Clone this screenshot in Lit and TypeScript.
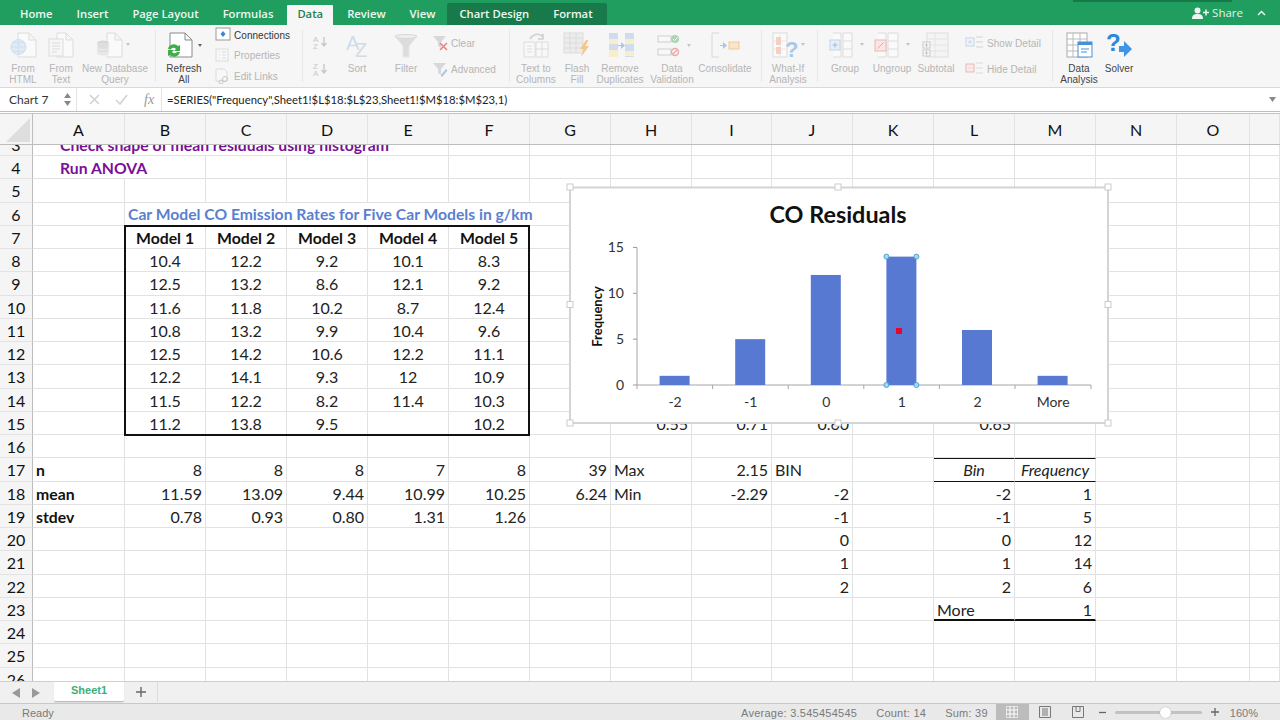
import { LitElement, html, css, svg } from "lit";
import { customElement } from "lit/decorators.js";

const F = "#dcdcdc";
const page = (x = 8, y = 2, w = 19, h = 24) => svg`<path d="M${x} ${y}h${w - 7}l7 7v${h - 7}h-${w}z M${x + w - 7} ${y}v7h7" fill="#fafafa" stroke="${F}"/>`;
const caret = (x: number, y: number, c = "#c4c4c4") => svg`<path d="M${x} ${y}h4l-2 3z" fill="${c}"/>`;

const icons: Record<string, any> = {
  html: svg`${page(13, 1, 18, 24)}<circle cx="13.500" cy="15" r="7.500" fill="#dfeaf5" stroke="#cfdfee"/><path d="M6 15h15M13.500 7.500v15M8 10.500h11M8 19.500h11" stroke="#cfdfee" fill="none"/>`,
  text: svg`${page(14, 1, 16, 24)}<rect x="6" y="7" width="14" height="17" fill="#f6f6f6" stroke="${F}"/><path d="M9 11h8M9 14h8M9 17h8M9 20h5" stroke="${F}"/>`,
  query: svg`${page(10, 1, 15, 24)}<ellipse cx="6" cy="11" rx="6" ry="2.500" fill="#d8d8d8"/><path d="M0 11v10c0 3 12 3 12 0v-10" fill="#dedede" stroke="#f2f2f2"/><path d="M0 15.500c0 3 12 3 12 0M0 19c0 3 12 3 12 0" stroke="#f2f2f2" fill="none"/>${caret(29, 11)}`,
  refresh: svg`<path d="M4 1h15l7 7v17h-22z M19 1v7h7" fill="#fff" stroke="#8a8a8a"/><path d="M2 17a6 6 0 0 1 10-3l2-1v6h-6l2-2a3.500 3.500 0 0 0-5 0z" fill="#3fae49"/><path d="M14 20a6 6 0 0 1-10 3l-2 1v-6h6l-2 2a3.500 3.500 0 0 0 5 0z" fill="#3fae49"/>${caret(32, 12, "#666")}`,
  arrows: svg`<text x="9" y="8" class="az">A</text><text x="9" y="15" class="az">Z</text><path d="M20 3v9M17.500 9l2.500 3 2.500-3" stroke="#c8c8c8" fill="none" stroke-width="1.400"/>`,
  arrows2: svg`<text x="9" y="8" class="az">Z</text><text x="9" y="15" class="az">A</text><path d="M20 3v9M17.500 9l2.500 3 2.500-3" stroke="#c8c8c8" fill="none" stroke-width="1.400"/>`,
  sort: svg`<text x="7" y="18" class="azl" fill="#cfdcee">A</text><text x="16" y="25" class="azl" fill="#d6dbe2">Z</text>`,
  filter: svg`<path d="M7 4h22l-8 10v11h-6v-11z" fill="#dcdcdc" stroke="#e6e6e6"/><ellipse cx="18" cy="4.500" rx="11" ry="2" fill="#efefef" stroke="#d8d8d8"/>`,
  ttc: svg`<path d="M6 10h11v15h-11zM18 10h12v15h-12zM24 10v15M18 17h12M9 14h5M9 17h5M9 20h5" stroke="${F}" fill="#f8f8f8"/><path d="M12 7c3-5 8-6 12-3l1-2v5h-5" stroke="#d0d0d0" fill="none" stroke-width="1.500"/>`,
  flash: svg`<rect x="5" y="1" width="19" height="20" fill="#ececec" stroke="${F}"/><path d="M11 1v20M17 1v20M5 6h19M5 11h19M5 16h19" stroke="#dcdcdc"/><path d="M27 8l-6 9h3.500l-2.500 8 8-11h-3.500l3-6z" fill="#f4c68c"/>`,
  remove: svg`<rect x="7" y="1" width="9" height="24" fill="#f7eecb"/><rect x="7" y="1" width="9" height="6" fill="#d2dcef"/><rect x="7" y="12" width="9" height="6" fill="#d2dcef"/><rect x="23" y="1" width="9" height="24" fill="#d2dcef"/><rect x="23" y="7" width="9" height="5" fill="#f7eecb"/><rect x="23" y="19" width="9" height="5" fill="#f7eecb"/><path d="M16 13h3v-3l4 3.500-4 3.500v-3h-3z" fill="#a9c7e8"/>`,
  valid: svg`<rect x="4" y="4" width="13" height="6" fill="#f8f8f8" stroke="#cfcfcf"/><rect x="4" y="17" width="13" height="6" fill="#f8f8f8" stroke="#cfcfcf"/><circle cx="21" cy="7" r="4" fill="#a9d8b0"/><path d="M19 7l1.500 1.500 3-3" stroke="#fff" fill="none"/><circle cx="21" cy="20" r="3.500" fill="#f5f5f5" stroke="#eaa8a8" stroke-width="1.400"/><path d="M18.700 22.300l4.600-4.600" stroke="#eaa8a8" stroke-width="1.300"/>${caret(33, 12)}`,
  consol: svg`<path d="M12 1h-7v24h7" fill="none" stroke="#d8d8d8"/><path d="M13 13h3v-3l4 3.500-4 3.500v-3h-3z" fill="#a9c7e8"/><rect x="22" y="10" width="10" height="7" fill="#f8e6cc" stroke="#eec997"/>`,
  whatif: svg`<rect x="3" y="1" width="14" height="24" fill="#fafafa" stroke="${F}"/><path d="M3 9h14M3 17h14M10 1v24" stroke="#e8e8e8"/><rect x="6" y="5" width="5" height="8" fill="#f5d0c2"/><rect x="6" y="15" width="5" height="7" fill="#f5d0c2"/><text x="15" y="25" class="q" fill="#a9c7e8">?</text>${caret(31, 11)}`,
  group: svg`<path d="M6 1h8v24h-8M16 1h9v24h-9zM16 9h9M16 17h9" stroke="${F}" fill="#fafafa"/><rect x="3" y="8" width="10" height="10" fill="#e6eef8" stroke="#c3d6ea"/><path d="M5.500 13h5M8 10.500v5" stroke="#a3bcd6"/>${caret(33, 11)}`,
  ungroup: svg`<path d="M4 1h8v24h-8M14 1h10v24h-10zM14 9h10M14 17h10" stroke="${F}" fill="#fafafa"/><rect x="1" y="8" width="11" height="11" fill="#fbe6e6" stroke="#eab6b6"/><path d="M3.500 16.500l6-6" stroke="#e5a5a5"/>${caret(32, 11)}`,
  subtotal: svg`<rect x="9" y="1" width="21" height="24" fill="#f4f4f4" stroke="#dedede"/><path d="M17 1v24M9 7h21M9 13h21M9 19h21" stroke="#e4e4e4"/><rect x="5" y="10" width="7" height="6" fill="#fafafa" stroke="#cacaca"/><rect x="5" y="18" width="7" height="6" fill="#fafafa" stroke="#cacaca"/><path d="M6.500 13h4M8.500 11v4M6.500 21h4M8.500 19v4" stroke="#c4c4c4"/>`,
  analysis: svg`<rect x="6" y="1" width="20" height="24" fill="#fff" stroke="#aaa"/><path d="M6 7h20M6 13h20M6 19h20M12 1v24M19 1v24" stroke="#bbb"/><rect x="17" y="10" width="14" height="15" fill="#fff" stroke="#4a8fd6"/><rect x="17" y="10" width="14" height="3" fill="#4a8fd6"/><path d="M20 17h8M20 20h6" stroke="#4a8fd6"/>`,
  solver: svg`<text x="5" y="19" class="q2" fill="#2f86de">?</text><path d="M18 14h5v-5l8 8-8 8v-5h-5z" fill="#3e94e6"/>`,
};

const small: Record<string, any> = {
  conn: svg`<rect x="1" y="1" width="14" height="12" fill="#fff" stroke="#999"/><path d="M8 4l2.500 3-2.500 3-2.500-3z" fill="#3b86d6"/>`,
  props: svg`<rect x="1" y="1" width="12" height="12" fill="#f8f8f8" stroke="${F}"/><path d="M4 4h1M7 4h4M4 7h1M7 7h4M4 10h1M7 10h4" stroke="#cfdfee"/>`,
  links: svg`<path d="M1 1h8l3 3v9h-11z" fill="#f8f8f8" stroke="${F}"/><circle cx="10" cy="11" r="2.500" fill="none" stroke="#c8c8c8"/><circle cx="6" cy="14" r="2" fill="none" stroke="#c8c8c8"/>`,
  clear: svg`<path d="M1 1h13l-5 6v6l-3-2v-4z" fill="#d8d8d8"/><path d="M8 8l7 7M15 8l-7 7" stroke="#e58a8a" stroke-width="1.700"/>`,
  adv: svg`<path d="M1 2h13l-5 6v6l-3-2v-4z" fill="#d8d8d8"/><path d="M9 14l5-6 1.500 1.500-5 6h-1.500z" fill="#a9c7e8"/>`,
  show: svg`<rect x="1" y="3" width="8" height="8" fill="#eef4fa" stroke="#c3d6ea"/><path d="M3 7h4M5 5v4M11 2h7M11 7h7M11 12h7" stroke="#d4d4d4"/>`,
  hide: svg`<rect x="1" y="3" width="8" height="8" fill="#fbeaea" stroke="#eab6b6"/><path d="M3 7h4M11 2h7M11 7h7M11 12h7" stroke="#dcdcdc"/>`,
};

type Rib =
  | { k: "gap"; w: number }
  | { k: "sep"; w: number }
  | { k: "big"; w: number; i: string; t: string[]; on?: boolean }
  | { k: "stack"; w: number; pad: number; iw: number; rows: [string, string, boolean?][]; three?: boolean }
  | { k: "pair"; w: number };

const ribbon: Rib[] = [
  { k: "gap", w: 4 },
  { k: "big", w: 38, i: "html", t: ["From", "HTML"] },
  { k: "big", w: 38, i: "text", t: ["From", "Text"] },
  { k: "big", w: 70, i: "query", t: ["New Database", "Query"] },
  { k: "sep", w: 10 },
  { k: "big", w: 48, i: "refresh", t: ["Refresh", "All"], on: true },
  { k: "stack", w: 92, pad: 7, iw: 16, three: true, rows: [["conn", "Connections", true], ["props", "Properties"], ["links", "Edit Links"]] },
  { k: "sep", w: 4 },
  { k: "pair", w: 36 },
  { k: "big", w: 34, i: "sort", t: ["Sort"] },
  { k: "gap", w: 10 },
  { k: "big", w: 44, i: "filter", t: ["Filter"] },
  { k: "stack", w: 77, pad: 4, iw: 16, rows: [["clear", "Clear"], ["adv", "Advanced"]] },
  { k: "sep", w: 8 },
  { k: "big", w: 46, i: "ttc", t: ["Text to", "Columns"] },
  { k: "big", w: 36, i: "flash", t: ["Flash", "Fill"] },
  { k: "big", w: 50, i: "remove", t: ["Remove", "Duplicates"] },
  { k: "big", w: 54, i: "valid", t: ["Data", "Validation"] },
  { k: "big", w: 52, i: "consol", t: ["Consolidate"] },
  { k: "sep", w: 20 },
  { k: "big", w: 34, i: "whatif", t: ["What-If", "Analysis"] },
  { k: "sep", w: 24 },
  { k: "big", w: 32, i: "group", t: ["Group"] },
  { k: "gap", w: 10 },
  { k: "big", w: 42, i: "ungroup", t: ["Ungroup"] },
  { k: "big", w: 46, i: "subtotal", t: ["Subtotal"] },
  { k: "stack", w: 86, pad: 6, iw: 19, rows: [["show", "Show Detail"], ["hide", "Hide Detail"]] },
  { k: "sep", w: 14 },
  { k: "big", w: 40, i: "analysis", t: ["Data", "Analysis"], on: true },
  { k: "big", w: 40, i: "solver", t: ["Solver"], on: true },
];

const COLS = ["A", "B", "C", "D", "E", "F", "G", "H", "I", "J", "K", "L", "M", "N", "O"];

type Cell = { t?: string; a?: string; span?: number; cls?: string };
const cells = new Map<string, Cell>();
const put = (r: number, c: number, t: string, a = "r", cls = "", span = 1) => cells.set(r + "," + c, { t, a, cls, span });

put(3, 1, "Check shape of mean residuals using histogram", "l", "purple", 5);
put(4, 1, "Run ANOVA", "l", "purple", 2);
put(6, 2, "Car Model CO Emission Rates for Five Car Models in g/km", "l", "title", 6);
["Model 1", "Model 2", "Model 3", "Model 4", "Model 5"].forEach((t, i) => put(7, 2 + i, t, "c", "bold"));
[
  ["10.4", "12.2", "9.2", "10.1", "8.3"],
  ["12.5", "13.2", "8.6", "12.1", "9.2"],
  ["11.6", "11.8", "10.2", "8.7", "12.4"],
  ["10.8", "13.2", "9.9", "10.4", "9.6"],
  ["12.5", "14.2", "10.6", "12.2", "11.1"],
  ["12.2", "14.1", "9.3", "12", "10.9"],
  ["11.5", "12.2", "8.2", "11.4", "10.3"],
  ["11.2", "13.8", "9.5", "", "10.2"],
].forEach((row, i) => row.forEach((t, j) => t && put(8 + i, 2 + j, t, "c")));
put(15, 8, "0.55"); put(15, 9, "0.71"); put(15, 10, "0.60"); put(15, 12, "0.65");
[
  [17, "n", ["8", "8", "8", "7", "8", "39"], "Max", "2.15"],
  [18, "mean", ["11.59", "13.09", "9.44", "10.99", "10.25", "6.24"], "Min", "-2.29"],
  [19, "stdev", ["0.78", "0.93", "0.80", "1.31", "1.26"], "", ""],
].forEach(([r, label, vals, h, i]: any) => {
  put(r, 1, label, "l", "bold");
  vals.forEach((t: string, j: number) => put(r, 2 + j, t));
  if (h) put(r, 8, h, "l");
  if (i) put(r, 9, i);
});
put(17, 10, "BIN", "l");
["-2", "-1", "0", "1", "2"].forEach((t, i) => put(18 + i, 10, t));
put(17, 12, "Bin", "c", "ital tt bb");
put(17, 13, "Frequency", "c", "ital tt bb");
const freq = [1, 5, 12, 14, 6, 1];
["-2", "-1", "0", "1", "2", "More"].forEach((t, i) => {
  const end = i === 5 ? "end" : "";
  put(18 + i, 12, t, i === 5 ? "l" : "r", end);
  put(18 + i, 13, String(freq[i]), "r", end);
});

const BAR_X = [659.6, 735.2, 810.8, 886.4, 962, 1037.6];
const BASE = 385;
const UNIT = 9.17;

const handles = [
  [570, 187], [838, 187], [1108, 187], [570, 304.5], [1108, 304.5], [570, 423], [838, 423], [1108, 423],
];

@customElement("app-root")
export class AppRoot extends LitElement {
  static styles = css`
    :host { display: block; width: 1280px; height: 720px; overflow: hidden; font-family: "Lato", sans-serif; background: #fff; }
    .app { display: flex; flex-direction: column; height: 720px; }
    .top { height: 25px; background: #1f9e60; display: flex; align-items: flex-end; padding-left: 8px; position: relative; flex: none; }
    .strip { position: absolute; left: 1073px; top: 0; width: 159px; height: 2px; background: #17784a; }
    .tab { height: 20px; padding: 0 12px; color: #eef8f2; font: 600 11.25px/18px "Open Sans", sans-serif; }
    .tab.active { background: #f6f6f6; color: #1f8050; padding: 0 10px; margin: 0 2px; border-radius: 1px 1px 0 0; }
    .chartTabs { display: flex; background: #187a4a; height: 22px; padding-right: 2px; border-radius: 2px 2px 0 0; align-items: flex-end; }
    .share { margin-left: auto; display: flex; align-items: center; gap: 3px; color: #e4f3ea; font: 400 11.5px "Open Sans", sans-serif; height: 25px; padding-right: 14px; }
    .share svg { display: block; }
    .chev { margin-left: 11px; }

    .ribbon { height: 62px; background: #f6f6f6; display: flex; flex: none; font: 10px/11px "Liberation Sans", sans-serif; color: #b5b5b5; letter-spacing: 0.05px; }
    .big { display: flex; flex-direction: column; align-items: center; padding-top: 7px; text-align: center; white-space: nowrap; flex: none; box-sizing: border-box; }
    .big svg { width: 36px; height: 28px; display: block; margin-bottom: 3px; flex: none; overflow: visible; }
    .on { color: #444; }
    .sep { flex: none; display: flex; justify-content: center; padding: 5px 0; box-sizing: border-box; }
    .sep i { width: 1px; background: #e6e6e6; display: block; }
    .gap { flex: none; }
    .stack { flex: none; display: flex; flex-direction: column; box-sizing: border-box; padding-top: 5px; }
    .stack.three { padding-top: 0; }
    .stack .item { height: 26px; display: flex; align-items: center; gap: 3px; white-space: nowrap; }
    .stack.three .item { height: 20.5px; }
    .stack svg { height: 16px; flex: none; }
    .stack .item.on { color: #333; }
    .pair { flex: none; display: flex; flex-direction: column; padding-top: 9px; gap: 10px; box-sizing: border-box; }
    .pair svg { width: 36px; height: 17px; display: block; }
    .az { font: 8px "Liberation Sans", sans-serif; fill: #c8c8c8; }
    .azl { font: 20px "Liberation Sans", sans-serif; }
    .q { font: bold 22px "Liberation Sans", sans-serif; }
    .q2 { font: bold 24px "Liberation Sans", sans-serif; }

    .fbar { height: 25px; background: #fff; border-top: 1px solid #d9d9d9; border-bottom: 1px solid #bdbdbd; display: flex; align-items: center; flex: none; box-sizing: border-box; }
    .name { width: 54px; padding-left: 9px; font-size: 12px; color: #333; }
    .step { width: 9px; display: flex; flex-direction: column; gap: 3px; align-items: center; margin-right: 4px; }
    .step svg { display: block; }
    .v { width: 1px; height: 23px; background: #e4e4e4; flex: none; }
    .fx { display: flex; align-items: center; width: 84px; padding-left: 12px; gap: 15px; box-sizing: border-box; flex: none; }
    .fxt { font: italic 14px "Liberation Serif", serif; color: #9a9a9a; margin-left: 1px; }
    .formula { padding-left: 5px; font-size: 11.3px; color: #222; white-space: nowrap; flex: 1; }
    .fcaret { margin-right: 4px; }

    .hdr { height: 32px; display: grid; grid-template-columns: 33px 92px repeat(7, 81px) 80px repeat(5, 81px) 73px 30px; background: #f5f5f5; border-top: 1px solid #c4c4c4; border-bottom: 1px solid #bdbdbd; box-sizing: border-box; flex: none; margin-top: 1px; }
    .hdr div { display: flex; align-items: center; justify-content: center; font-size: 16px; color: #111; border-right: 1px solid #e2e2e2; box-sizing: border-box; }
    .hdr div.corner { border-right: 1px solid #bdbdbd; align-items: flex-end; justify-content: flex-start; padding: 0 0 2px 6px; }

    .body { flex: 1; overflow: hidden; position: relative; min-height: 0; }
    .sheet { display: grid; grid-template-columns: 33px 92px repeat(7, 81px) 80px repeat(5, 81px) 73px 30px; grid-auto-rows: 23.25px; margin-top: -12.25px; }
    .c { box-sizing: border-box; border-right: 1px solid #e2e2e2; border-bottom: 1px solid #e2e2e2; background: #fff; font-size: 16px; line-height: 23px; color: #222; padding: 0 3px; white-space: nowrap; overflow: visible; }
    .rh { background: #f5f5f5; border-right: 1px solid #bdbdbd; text-align: center; padding: 0; font-size: 16px; color: #111; }
    .r { text-align: right; }
    .l { text-align: left; }
    .ctr { text-align: center; }
    .purple { color: #7a0f9a; font-weight: 700; padding-left: 27px; font-size: 15.75px; }
    .title { color: #5b7fd0; font-weight: 700; padding-left: 3px; font-size: 15.7px; }
    .bold { font-weight: 700; color: #111; font-size: 15.8px; }
    .ital { font-style: italic; }
    .tt { border-top: 1px solid #111; line-height: 22px; }
    .bb { border-bottom: 1px solid #111; }
    .end { border-bottom: 2px solid #111; }
    .box { border: 2px solid #111; z-index: 1; pointer-events: none; box-sizing: border-box; margin: -1px 0 -1px -1px; }

    .chart { position: absolute; left: 560px; top: 35px; width: 560px; height: 250px; display: block; }
    .chart text { font-family: "Lato", sans-serif; }
    .ctitle { font-size: 23.4px; font-weight: 700; fill: #111; }
    .tick { font-size: 14px; fill: #333; }
    .ylab { font-size: 13px; font-weight: 700; fill: #111; }

    .tabs { height: 22px; background: #f0f0f0; border-top: 1px solid #cfcfcf; display: flex; flex: none; box-sizing: border-box; }
    .navs { width: 54px; display: flex; align-items: center; padding-left: 12px; gap: 12px; box-sizing: border-box; }
    .stab { width: 70px; height: 19px; background: #fff; color: #3fae7a; font: 700 11px/16px "Liberation Sans", sans-serif; text-align: center; border-bottom: 1px solid #bbb; border-radius: 0 0 2px 2px; box-shadow: 0 1px 1px #ddd; }
    .plus { width: 33px; display: flex; align-items: center; justify-content: center; border-right: 1px solid #ddd; height: 20px; }
    .status { height: 17px; background: #e9e9e9; border-top: 1px solid #c9c9c9; display: flex; align-items: center; font: 11px "Liberation Sans", sans-serif; color: #7a7a7a; padding-left: 22px; flex: none; box-sizing: border-box; }
    .status span { position: relative; top: 1px; }
    .sp { flex: 1; }
    .stat { margin-right: 19px; letter-spacing: 0.25px; }
    .stat.last { margin-right: 8px; }
    .view { width: 33px; height: 16px; display: flex; align-items: center; justify-content: center; flex: none; }
    .view.sel { background: #bcbcbc; }
    .zoomctl { display: flex; align-items: center; margin-left: 4px; gap: 6px; }
    .slider { width: 87px; height: 3px; background: #c2c2c2; border-radius: 2px; position: relative; margin: 0 3px; }
    .thumb { position: absolute; left: 45px; top: -4px; width: 11px; height: 11px; background: #fff; border-radius: 50%; box-shadow: 0 0 1px #888; }
    .pct { margin: 0 22px 0 11px; }
  `;

  private renderRibbon() {
    return ribbon.map((it) => {
      const w = `width:${it.w}px`;
      switch (it.k) {
        case "gap":
          return html`<div class="gap" style=${w}></div>`;
        case "sep":
          return html`<div class="sep" style=${w}><i></i></div>`;
        case "big":
          return html`<div class="big ${it.on ? "on" : ""}" style=${w}>
            <svg viewBox="0 0 36 28">${icons[it.i]}</svg>
            ${it.t.map((l) => html`<div>${l}</div>`)}
          </div>`;
        case "pair":
          return html`<div class="pair" style=${w}>
            <svg viewBox="0 0 36 17">${icons.arrows}</svg>
            <svg viewBox="0 0 36 17">${icons.arrows2}</svg>
          </div>`;
        case "stack":
          return html`<div class="stack ${it.three ? "three" : ""}" style="${w};padding-left:${it.pad}px">
            ${it.rows.map((r) => html`<div class="item ${r[2] ? "on" : ""}"><svg style="width:${it.iw}px" viewBox="0 0 ${it.iw} 16">${small[r[0]]}</svg>${r[1]}</div>`)}
          </div>`;
      }
    });
  }

  private renderSheet() {
    const out: any[] = [];
    const covered = new Set<string>();
    for (let r = 3; r <= 26; r++) {
      const gr = r - 2;
      out.push(html`<div class="c rh" style="grid-row:${gr};grid-column:1">${r}</div>`);
      for (let c = 1; c <= 16; c++) {
        const key = r + "," + c;
        if (covered.has(key)) continue;
        const cell = cells.get(key);
        const span = cell?.span ?? 1;
        for (let s = 1; s < span; s++) covered.add(r + "," + (c + s));
        const a = cell ? (cell.a === "c" ? "ctr" : cell.a) : "";
        out.push(html`<div class="c ${a} ${cell?.cls ?? ""}" style="grid-row:${gr};grid-column:${c + 1}/span ${span}">${cell?.t ?? ""}</div>`);
      }
    }
    out.push(html`<div class="box" style="grid-row:5/14;grid-column:3/8"></div>`);
    return out;
  }

  private renderChart() {
    const axisX = [637, 712.6, 788.2, 863.8, 939.4, 1015, 1091];
    const labels = ["-2", "-1", "0", "1", "2", "More"];
    return svg`
      <svg class="chart" viewBox="560 180 560 250">
        <rect x="570" y="187.5" width="538" height="235.5" fill="#fff" stroke="#d4d4d4" stroke-width="2"/>
        ${handles.map(([x, y]) => svg`<rect x="${x - 3}" y="${y - 3}" width="6" height="6" fill="#fff" stroke="#cccccc"/>`)}
        <text class="ctitle" x="838" y="222.5" text-anchor="middle">CO Residuals</text>
        ${[0, 5, 10, 15].map((v) => {
          const y = BASE - v * UNIT;
          return svg`<text class="tick" x="624" y="${y + 4.5}" text-anchor="end">${v}</text><path d="M633 ${y}h4" stroke="#999"/>`;
        })}
        <path d="M637 247.5V385H1091" fill="none" stroke="#a6a6a6"/>
        ${axisX.map((x) => svg`<path d="M${x} 385v4" stroke="#a6a6a6"/>`)}
        <text class="ylab" transform="translate(601.5 316.5) rotate(-90)" text-anchor="middle">Frequency</text>
        ${freq.map((f, i) => svg`<rect x="${BAR_X[i]}" y="${BASE - f * UNIT}" width="30" height="${f * UNIT}" fill="#5779d1"/>`)}
        ${labels.map((l, i) => svg`<text class="tick" x="${BAR_X[i] + 15.5}" y="407" text-anchor="middle">${l}</text>`)}
        <rect x="896" y="328" width="6" height="6" fill="#e8062c"/>
        ${[[886.4, 256.6], [916.4, 256.6], [886.4, 385], [916.4, 385]].map(([x, y]) => svg`<circle cx="${x}" cy="${y}" r="2.5" fill="#a6d8f4" stroke="#4fa3d8"/>`)}
      </svg>`;
  }

  render() {
    return html`<div class="app">
      <div class="top">
        <div class="strip"></div>
        <div class="tab">Home</div><div class="tab">Insert</div><div class="tab">Page Layout</div><div class="tab">Formulas</div>
        <div class="tab active">Data</div><div class="tab">Review</div><div class="tab">View</div>
        <div class="chartTabs"><div class="tab">Chart Design</div><div class="tab">Format</div></div>
        <div class="share">
          <svg width="17" height="12" viewBox="0 0 17 12"><circle cx="5.5" cy="3.5" r="3" fill="#eaf6ef"/><path d="M0 12c0-4 2-5 5.5-5s5.5 1 5.500 5z" fill="#eaf6ef"/><path d="M11 5.5h6M14 2.5v6" stroke="#eaf6ef" stroke-width="1.5"/></svg>
          <span>Share</span>
          <svg class="chev" width="9" height="6" viewBox="0 0 9 6"><path d="M1 5l3.5-3.5L8 5" stroke="#eaf6ef" fill="none" stroke-width="1.5"/></svg>
        </div>
      </div>
      <div class="ribbon">${this.renderRibbon()}</div>
      <div class="fbar">
        <div class="name">Chart 7</div>
        <div class="step">
          <svg width="7" height="5" viewBox="0 0 7 5"><path d="M0 5L3.5 0 7 5z" fill="#888"/></svg>
          <svg width="7" height="5" viewBox="0 0 7 5"><path d="M0 0L3.5 5 7 0z" fill="#888"/></svg>
        </div>
        <div class="v"></div>
        <div class="fx">
          <svg width="11" height="11" viewBox="0 0 11 11"><path d="M1 1l9 9M10 1l-9 9" stroke="#d0d0d0" stroke-width="1.5"/></svg>
          <svg width="13" height="11" viewBox="0 0 13 11"><path d="M1 6l4 4 7-9" stroke="#d0d0d0" stroke-width="1.5" fill="none"/></svg>
          <span class="fxt">fx</span>
        </div>
        <div class="v"></div>
        <div class="formula">=SERIES("Frequency",Sheet1!$L$18:$L$23,Sheet1!$M$18:$M$23,1)</div>
        <svg class="fcaret" width="7" height="5" viewBox="0 0 7 5"><path d="M0 0h7L3.5 5z" fill="#888"/></svg>
      </div>
      <div class="hdr">
        <div class="corner"><svg width="24" height="24" viewBox="0 0 24 24"><path d="M24 0v24H0z" fill="#dedede"/></svg></div>
        ${COLS.map((c) => html`<div>${c}</div>`)}
        <div></div>
      </div>
      <div class="body">
        <div class="sheet">${this.renderSheet()}</div>
        ${this.renderChart()}
      </div>
      <div class="tabs">
        <div class="navs">
          <svg width="8" height="10" viewBox="0 0 8 10"><path d="M8 0v10L0 5z" fill="#999"/></svg>
          <svg width="8" height="10" viewBox="0 0 8 10"><path d="M0 0v10l8-5z" fill="#999"/></svg>
        </div>
        <div class="stab">Sheet1</div>
        <div class="plus"><svg width="10" height="10" viewBox="0 0 10 10"><path d="M0 5h10M5 0v10" stroke="#666" stroke-width="1.4"/></svg></div>
      </div>
      <div class="status">
        <span>Ready</span><span class="sp"></span>
        <span class="stat">Average: 3.545454545</span><span class="stat">Count: 14</span><span class="stat last">Sum: 39</span>
        <div class="view sel"><svg width="12" height="12" viewBox="0 0 12 12"><path d="M0 0h12v12H0zM4 0v12M8 0v12M0 4h12M0 8h12" fill="none" stroke="#fff"/></svg></div>
        <div class="view"><svg width="12" height="12" viewBox="0 0 12 12"><path d="M.5.5h11v11H.5zM3 3h6M3 5h6M3 7h6M3 9h6" fill="none" stroke="#777"/></svg></div>
        <div class="view"><svg width="12" height="12" viewBox="0 0 12 12"><path d="M.5.5h11v11H.5zM4 .5v5h4v-5" fill="none" stroke="#777"/></svg></div>
        <div class="zoomctl">
          <svg width="7" height="7" viewBox="0 0 7 7"><path d="M0 3.5h7" stroke="#666" stroke-width="1.3"/></svg>
          <div class="slider"><div class="thumb"></div></div>
          <svg width="8" height="8" viewBox="0 0 8 8"><path d="M0 4h8M4 0v8" stroke="#666" stroke-width="1.3"/></svg>
        </div>
        <span class="pct">160%</span>
      </div>
    </div>`;
  }
}
